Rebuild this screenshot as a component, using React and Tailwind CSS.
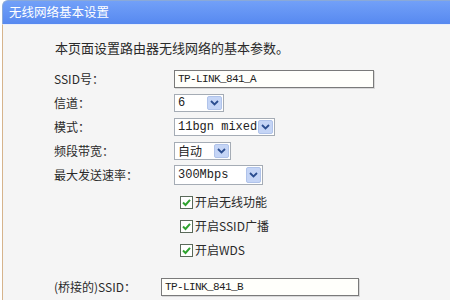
import React from "react";

const cjk = { fontFamily: '"SimSun","Noto Sans CJK SC","Liberation Sans",sans-serif' };
const mono = { fontFamily: '"Liberation Mono","Noto Sans CJK SC",monospace' };

function Chevron() {
  return (
    <svg width="9" height="6" viewBox="0 0 9 6">
      <path d="M1 1 L4.5 4.5 L8 1" fill="none" stroke="#2b4d8f" strokeWidth="1.8" />
    </svg>
  );
}

function Select({ value, width, height = 18, cjkText = false }) {
  return (
    <div
      className="flex items-center bg-white border border-[#a5acb5] box-border"
      style={{ width, height }}
    >
      <span className="flex-1 pl-[3px] text-[12px] text-[#222] leading-none" style={cjkText ? cjk : mono}>
        {value}
      </span>
      <div className="w-[15px] h-[calc(100%-2px)] mr-[1px] bg-[#c5d5f6] border border-[#b0c3ea] rounded-[2px] flex items-center justify-center">
        <Chevron />
      </div>
    </div>
  );
}

function Input({ value, width }) {
  return (
    <div
      className="h-[18px] bg-[#fffffb] border border-[#7a7a7a] shadow-[1px_1px_0_#d8d8d8] flex items-center box-border"
      style={{ width }}
    >
      <span className="pl-[3px] text-[11px] tracking-[-0.6px] text-[#222] leading-none" style={mono}>
        {value}
      </span>
    </div>
  );
}

function Check({ label }) {
  return (
    <div className="h-[24px] flex items-center pl-[177px]">
      <svg width="13" height="13" viewBox="0 0 13 13" className="shrink-0">
        <rect x="0.5" y="0.5" width="12" height="12" fill="#fff" stroke="#5a6a5a" />
        <path d="M3 6.5 L5.5 9 L10 3.8" fill="none" stroke="#2fa32f" strokeWidth="2" />
      </svg>
      <span className="ml-[2px] text-[12px] text-[#2a2a2a] leading-none" style={cjk}>
        {label}
      </span>
    </div>
  );
}

function Row({ label, children }) {
  return (
    <div className="h-[24px] flex items-center">
      <span className="w-[120px] pl-[51px] box-content text-[12px] text-[#2a2a2a] leading-none" style={cjk}>
        {label}
      </span>
      <div className="flex items-center">{children}</div>
    </div>
  );
}

export default function App() {
  return (
    <div className="w-[450px] h-[300px] overflow-hidden bg-white relative">
      <div className="ml-[2px] h-[24px] rounded-tl-[6px] border-t border-l border-[#8aa9d8] bg-gradient-to-b from-[#72a0f8] to-[#5789f0] flex items-center">
        <span className="pl-[6px] text-[12.5px] text-white leading-none" style={cjk}>
          无线网络基本设置
        </span>
      </div>
      <div className="ml-[2px] h-[276px] border-l border-[#d6b48c] border-t border-t-[#e8eefb] bg-[#f5f5f5]">
        <div className="h-[14px]" />
        <div className="h-[16px] flex items-center pl-[52px]">
          <span className="text-[13px] text-[#2a2a2a] leading-none" style={cjk}>
            本页面设置路由器无线网络的基本参数。
          </span>
        </div>
        <div className="h-[12px]" />
        <Row label="SSID号：">
          <Input value="TP-LINK_841_A" width={200} />
        </Row>
        <Row label="信道：">
          <Select value="6" width={50} />
        </Row>
        <Row label="模式：">
          <Select value="11bgn mixed" width={101} />
        </Row>
        <Row label="频段带宽：">
          <Select value="自动" width={57} cjkText />
        </Row>
        <Row label="最大发送速率：">
          <Select value="300Mbps" width={89} height={20} />
        </Row>
        <div className="h-[3px]" />
        <Check label="开启无线功能" />
        <Check label="开启SSID广播" />
        <Check label="开启WDS" />
        <div className="h-[13px]" />
        <div className="h-[24px] flex items-center">
          <span className="w-[107px] pl-[51px] box-content text-[12px] text-[#2a2a2a] leading-none" style={cjk}>
            (桥接的)SSID：
          </span>
          <Input value="TP-LINK_841_B" width={198} />
        </div>
      </div>
    </div>
  );
}
